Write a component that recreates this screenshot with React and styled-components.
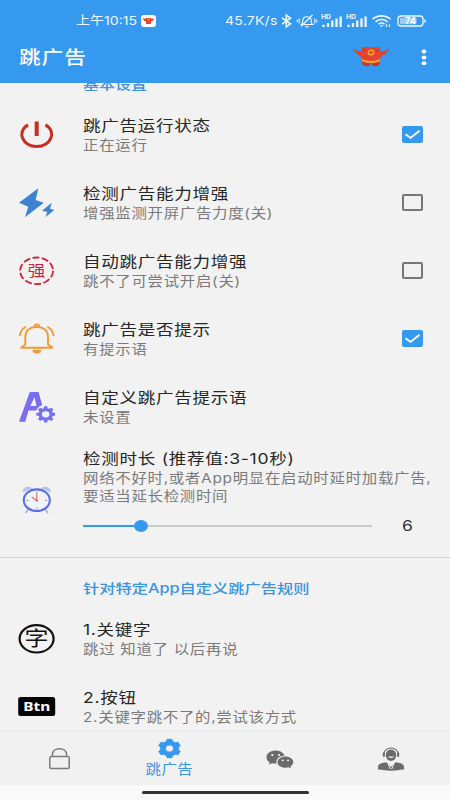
import React from "react";
import styled, { createGlobalStyle } from "styled-components";

const Global = createGlobalStyle`
  * { box-sizing: border-box; }
  html, body { margin: 0; padding: 0; }
  body { font-family: Inter, "Noto Sans CJK SC", sans-serif; background: #f2f2f2; }
  svg { display: block; overflow: visible; flex: none; }
`;

const Screen = styled.div`
  width: 450px;
  height: 800px;
  display: flex;
  flex-direction: column;
  overflow: hidden;
  background: #f2f2f2;
`;

const Label = styled.span`
  display: block;
  width: max-content;
  white-space: nowrap;
  transform: scaleX(${(p) => p.$stretch || 1.17});
  transform-origin: ${(p) => p.$origin || "left"} center;
`;

const Header = styled.header`
  height: 83px;
  flex: none;
  background: #3699f0;
  color: #fff;
`;

const StatusBar = styled.div`
  height: 42px;
  display: flex;
  align-items: center;
  justify-content: space-between;
  padding: 0 24px 0 76px;
`;

const StatusGroup = styled.div`
  display: flex;
  align-items: center;
`;

const StatusText = styled(Label)`
  font-size: 12px;
  line-height: 16px;
  letter-spacing: ${(p) => p.$spacing || 0}px;
  opacity: 0.92;
`;

const ClockSlot = styled.div`
  width: 65px;
`;

const SpeedSlot = styled.div`
  width: 55px;
`;

const TitleBar = styled.div`
  height: 32px;
  display: flex;
  align-items: center;
  padding: 0 23px 0 19px;
`;

const AppTitle = styled(Label)`
  font-size: 18.5px;
  line-height: 28px;
  font-weight: 500;
  letter-spacing: 0.8px;
  padding-bottom: 2px;
`;

const TitleActions = styled.div`
  display: flex;
  align-items: center;
  gap: 32px;
  margin-left: auto;
  padding-bottom: 2px;
`;

const Content = styled.main`
  flex: 1;
  min-height: 0;
  overflow: hidden;
`;

const SectionTitle = styled.h2`
  margin: 0;
  height: ${(p) => p.$height}px;
  padding: ${(p) => p.$top}px 0 0 83px;
  font-size: 13px;
  line-height: 20px;
  font-weight: 500;
  color: #3b93e2;
  margin-top: ${(p) => p.$shift || 0}px;
`;

const Row = styled.div`
  height: ${(p) => p.$height || 68}px;
  display: flex;
  align-items: center;
  padding: 0 27px 0 17px;
`;

const TextBlock = styled.div`
  width: 310px;
  margin-left: 26px;
  padding-top: ${(p) => (p.$tall ? 0 : 2)}px;
  padding-bottom: ${(p) => (p.$tall ? 10 : 0)}px;
`;

const ItemTitle = styled(Label)`
  font-size: 15px;
  line-height: 20px;
  letter-spacing: 0.6px;
  color: #262626;
`;

const ItemText = styled(Label)`
  font-size: 13.2px;
  line-height: 18px;
  letter-spacing: 0.6px;
  color: #7a7a7a;
`;

const Box = styled.span`
  width: 21px;
  height: 17px;
  margin-left: 10.5px;
  border-radius: 2px;
  border: ${(p) => (p.$on ? "0" : "2px solid #777")};
  background: ${(p) => (p.$on ? "#3699f0" : "transparent")};
  flex: none;
`;

const SliderLine = styled.div`
  display: flex;
  align-items: center;
  height: 24px;
  margin-top: 9px;
`;

const Track = styled.div`
  width: 289px;
  flex: none;
  height: 2px;
  display: flex;
  align-items: center;
  background: #cbcbcb;
`;

const Fill = styled.div`
  width: 51px;
  height: 2px;
  background: #3699f0;
`;

const Thumb = styled.div`
  width: 14px;
  height: 12px;
  border-radius: 50%;
  background: #3699f0;
`;

const SliderValue = styled(Label)`
  margin-left: 30px;
  font-size: 15px;
  line-height: 20px;
  color: #333;
`;

const Divider = styled.div`
  height: 1px;
  background: #d2d2d2;
`;

const Nav = styled.nav`
  height: 54px;
  flex: none;
  display: flex;
  padding: 0 4px;
  border-top: 1px solid #ebebeb;
  background: #f1f1f1;
`;

const NavItem = styled.div`
  flex: 1;
  display: flex;
  flex-direction: column;
  align-items: center;
  justify-content: center;
`;

const NavLabel = styled(Label)`
  font-size: 13.2px;
  line-height: 17px;
  margin-top: 3px;
  letter-spacing: 0.4px;
  color: #3d97e6;
`;

const GestureArea = styled.div`
  height: 15px;
  flex: none;
  display: flex;
  justify-content: center;
  padding-top: 6px;
  background: #fafafa;
`;

const GestureBar = styled.div`
  width: 167px;
  height: 3px;
  border-radius: 2px;
  background: #333;
`;

const RowSvg = ({ children }) => (
  <svg width="40" height="40" viewBox="0 0 40 40" fill="none">{children}</svg>
);

const PowerIcon = () => (
  <RowSvg>
    <path d="M11 10.8C-1 18 6 32.5 19.7 32.5S40.5 18 28.5 10.8" stroke="#cb2b20" strokeWidth="3.1" />
    <path d="M19.7 7.5V22" stroke="#cb2b20" strokeWidth="4" />
  </RowSvg>
);

const BoltIcon = () => (
  <RowSvg>
    <path d="M21.3 6.3 2 20.7l9.3 4L8 35.3 26.7 20.7l-8-2.7zM34.7 20.7 25 28.7l5.3 1.3-2 5.3L37.3 28 33 26.7z" fill="#3d83d2" />
  </RowSvg>
);

const StrongIcon = () => (
  <RowSvg>
    <ellipse cx="19.6" cy="20.8" rx="16.5" ry="13.3" stroke="#cf2339" strokeWidth="1.8" strokeDasharray="7 2.4" />
    <text transform="translate(10.8 26) scale(1.17 1)" fontSize="15" fill="#cf2339">强</text>
  </RowSvg>
);

const BellIcon = () => (
  <RowSvg>
    <g stroke="#f09b38" strokeWidth="1.9" strokeLinecap="round" strokeLinejoin="round">
      <path d="M8.3 26.2V19C8.3 12.5 13 9 19.7 9S31 12.5 31 19v7.2c0 1.8 4.4 1.8 4.4 3.6H4.2c0-1.8 4.1-1.8 4.1-3.6zM17.2 8.8C17 5.5 22.4 5.5 22.2 8.8M8.3 9C5.2 11 3.3 14 2.8 17.2M31 9c3.1 2 5 5 5.5 8.2" />
      <path d="M16.5 32.6h6.8c-.8 2.6-6 2.6-6.8 0z" fill="#f09b38" />
    </g>
  </RowSvg>
);

const gearPath = (cx, cy, rx, ry, teeth, inner) => {
  const pts = [];
  for (let i = 0; i < teeth; i += 1) {
    [[-0.36, inner], [-0.2, 1], [0.2, 1], [0.36, inner]].forEach(([o, r]) => {
      const a = ((i + o) / teeth) * Math.PI * 2 - Math.PI / 2;
      pts.push(`${(cx + Math.cos(a) * rx * r).toFixed(2)} ${(cy + Math.sin(a) * ry * r).toFixed(2)}`);
    });
  }
  return `M${pts.join("L")}Z`;
};

const FontGearIcon = () => (
  <RowSvg>
    <path d="M2 35.8 12.8 6h8.8l3.6 13.2c-3.2.8-5 2.6-5.8 5.3h-8L8.3 35.8zM13.3 20h6.2l-2-9z" fill="#796df2" fillRule="evenodd" />
    <path d={`${gearPath(28.7, 28.3, 9.5, 8.2, 8, 0.76)}M24.9 28.3a3.8 3.1 0 1 0 7.6 0a3.8 3.1 0 1 0-7.6 0`} fill="#796df2" fillRule="evenodd" />
  </RowSvg>
);

const AlarmIcon = () => (
  <RowSvg>
    <path d="M6 13.5C4.8 8.5 12 6 15.5 9.5zM33.6 13.5C34.8 8.5 27.6 6 24.1 9.5z" fill="#b5c4f3" />
    <path d="m11 30.5-2 3M28.6 30.5l2 3" stroke="#9eaeea" strokeWidth="1.5" strokeLinecap="round" />
    <ellipse cx="19.8" cy="21.2" rx="13" ry="10.8" fill="#f1f3fd" stroke="#5f6fdf" strokeWidth="2.1" />
    <path d="M19.8 12.8v1.7M19.8 28.5v1.7M9.5 21.5h1.8M28.2 21.5H30" stroke="#7b87df" />
    <path d="M19.8 14.5v7l-5-3.4" stroke="#ee7b69" strokeWidth="1.4" />
    <circle cx="19.8" cy="21.5" r="1.3" fill="#ee7b69" />
  </RowSvg>
);

const CharIcon = () => (
  <RowSvg>
    <ellipse cx="19.6" cy="20.8" rx="17" ry="13.7" stroke="#111" strokeWidth="2.2" />
    <text transform="translate(7.6 28.4) scale(1.17 1)" fontSize="20.5" fill="#111">字</text>
  </RowSvg>
);

const BtnIcon = () => (
  <RowSvg>
    <rect x="1.2" y="11" width="37" height="19" rx="2.5" fill="#050505" />
    <text x="19.8" y="25.2" textAnchor="middle" textLength="27" lengthAdjust="spacingAndGlyphs" fontSize="13" fontWeight="700" fontFamily="Noto Sans, sans-serif" fill="#fff">Btn</text>
  </RowSvg>
);

const Check = ({ on }) => (
  <Box $on={on}>
    {on && (
      <svg width="21" height="17" viewBox="0 0 21 17" fill="none">
        <path d="m3.5 8.2 5 3.7 9-7.2" stroke="#fff" strokeWidth="1.9" />
      </svg>
    )}
  </Box>
);

const Mascot = () => (
  <svg width="36" height="20" viewBox="0 0 36 20">
    <path d="M9 4C6 5 3 3.5 0 1.5c.7 3.6 3 4 3 4s.3 2.6 3 2.7c.8 1.7 2 1.8 4 1.5zM27 4c3 1 6-.5 9-2.5-.7 3.6-3 4-3 4s-.3 2.6-3 2.7c-.8 1.7-2 1.8-4 1.5z" fill="#dc4435" />
    <path d="M9 12C8 17 10 20 16 19l2-3 2 3c6 1 8-2 7-7z" fill="#c8362c" />
    <rect x="8.8" y="0" width="18.4" height="14.5" rx="2" fill="#e8432f" />
    <path d="M9 2.5q9 5 18 0" stroke="#b8322b" strokeWidth=".8" fill="none" />
    <path d="M9 12.2q9 3.4 18 0v2.3q-9 3.4-18 0z" fill="#f7a52c" />
    <ellipse cx="18" cy="5.5" rx="2.9" ry="2.3" fill="#e9502d" stroke="#f9b23c" strokeWidth="1.2" />
  </svg>
);

const AppBadge = () => (
  <svg width="15" height="12" viewBox="0 0 15 12">
    <rect width="15" height="12" rx="3" fill="#fff" />
    <path d="M1.5 3l3 1V3h6v1l3-1-1.8 3-1.5.2L9.8 9H5.2L4.8 6.2 3.2 6z" fill="#e5452c" />
    <ellipse cx="7.5" cy="4.3" rx="1.4" ry=".9" fill="#f5a143" />
  </svg>
);

const MoreIcon = () => (
  <svg width="6" height="17" viewBox="0 0 6 17" fill="#fff">
    <ellipse cx="3" cy="2.5" rx="2.4" ry="2" />
    <ellipse cx="3" cy="8.4" rx="2.4" ry="2" />
    <ellipse cx="3" cy="14.2" rx="2.4" ry="2" />
  </svg>
);

const StatusIcons = () => (
  <svg width="146" height="16" viewBox="0 0 146 16" fill="none" stroke="#f0f8ff">
    <path d="m2 4.8 8.5 6L6.3 14V2l4.2 3.2L2 11.2" strokeWidth="1.6" />
    <path d="M21.5 11.5c1.6-1 1-3 1.4-4.8.5-4 7.6-4 8.1 0 .4 1.8-.2 3.8 1.6 4.8zM25.3 13.2q1.7 1.4 3.4 0M32.5 2 21 13.5M19.2 5.5v5M34.8 5.5v5M17.2 6.8v2.5M36.8 6.8v2.5" strokeWidth="1.1" />
    {[41, 66].map((x) => (
      <g key={x}>
        <text x={x} y="6" fontSize="5.5" fontWeight="700" fill="#f0f8ff" stroke="none" textLength="10" lengthAdjust="spacingAndGlyphs">HD</text>
        <path d={`M${x + 2.5} 14v-2.2M${x + 7} 14V10M${x + 11.3} 14V7.5M${x + 15.5} 14V5.5M${x + 19.6} 14V3.5`} strokeWidth="2.3" />
      </g>
    ))}
    <path d="M92.5 6.2c5-4.5 13-4.5 18 0M95.5 8.8c3.5-3 8.5-3 12 0M98.5 11.2c2-1.6 4-1.6 6 0" strokeWidth="1.6" />
    <path d="m99.5 12.3 2 1.8 2-1.8z" fill="#f0f8ff" stroke="none" />
    <path d="M106.3 14v-2.8M109.3 11.2V14" strokeWidth="1.1" />
    <rect x="118" y="3" width="25" height="10" rx="3" strokeWidth="1.3" />
    <rect x="120" y="4.8" width="16.5" height="6.4" rx="1" fill="#9bcdf8" stroke="none" />
    <path d="M145 6.5v3" strokeWidth="1.4" />
    <text x="130.5" y="11.2" textAnchor="middle" fontSize="8.5" fontWeight="700" fill="#fff" stroke="none" textLength="11" lengthAdjust="spacingAndGlyphs">74</text>
  </svg>
);

const LockIcon = () => (
  <svg width="21" height="22" viewBox="0 0 21 22" fill="none" stroke="#7b7b7b" strokeWidth="1.5">
    <rect x=".8" y="8.4" width="19.4" height="12" rx="1.5" />
    <path d="M3.5 8.4V6.3c0-7.4 14-7.4 14 0v2.1" />
  </svg>
);

const GearIcon = () => (
  <svg width="23" height="19" viewBox="0 0 23 19">
    <path d={`${gearPath(11.5, 9.5, 11.6, 9.6, 6, 0.8)}M7.7 9.5a3.8 3.2 0 1 0 7.6 0a3.8 3.2 0 1 0-7.6 0`} fill="#3699f0" fillRule="evenodd" stroke="#3699f0" strokeWidth=".4" strokeLinejoin="round" />
  </svg>
);

const ChatIcon = () => (
  <svg width="28" height="18" viewBox="0 0 28 18" fill="#6b6b6b">
    <path d="M9.5.5C4.3.5.5 3.6.5 7.2c0 2.2 1.2 3.9 3.2 5.2l-.8 2.3 3.2-1.5c1.4.4 2.6.6 4.4.4-1-4.4 3-7.9 8-7.8C17.7 2.6 14 .5 9.5.5z" />
    <path d="M19.5 6.5c-4.5 0-8 2.5-8 5.7s3.5 5.5 8 5.5c1.1 0 2-.1 3-.4l2.4 1.1-.5-2c1.7-1.1 2.9-2.5 2.9-4.3 0-3.1-3.4-5.6-7.8-5.6z" />
    <g fill="#f1f1f1">
      <ellipse cx="6.3" cy="5" rx="1.2" ry="1" />
      <ellipse cx="13" cy="5" rx="1.2" ry="1" />
      <ellipse cx="16.8" cy="10.3" rx="1.1" ry=".9" />
      <ellipse cx="22" cy="10.3" rx="1.1" ry=".9" />
    </g>
  </svg>
);

const SupportIcon = () => (
  <svg width="28" height="24" viewBox="0 0 28 24" fill="#6b6b6b">
    <ellipse cx="14" cy="8.2" rx="5.2" ry="5.8" />
    <path d="M6.8 7.5C6.8-1.2 21.2-1.2 21.2 7.5" fill="none" stroke="#6b6b6b" strokeWidth="1.1" />
    <rect x="5.8" y="5.5" width="2.1" height="4.5" rx="1" />
    <rect x="20.1" y="5.5" width="2.1" height="4.5" rx="1" />
    <path d="M10.8 9.5q3.2 3 6.4 0z" fill="#f1f1f1" />
    <path d="M9.7 15.2 14 20l4.3-4.8c4.8.7 8 1.2 8.5 3.8l.5 3.3c-8.6 1.8-18 1.8-26.6 0l.5-3.3c.5-2.6 4-3.1 8.8-3.8z" />
    <path d="m10.5 15 2.7 7M17.5 15l-2.7 7" stroke="#f1f1f1" strokeWidth="1" />
  </svg>
);

const basicItems = [
  { icon: PowerIcon, title: "跳广告运行状态", text: "正在运行", checked: true },
  { icon: BoltIcon, title: "检测广告能力增强", text: "增强监测开屏广告力度(关)", checked: false },
  { icon: StrongIcon, title: "自动跳广告能力增强", text: "跳不了可尝试开启(关)", checked: false },
  { icon: BellIcon, title: "跳广告是否提示", text: "有提示语", checked: true },
  { icon: FontGearIcon, title: "自定义跳广告提示语", text: "未设置" },
];

const ruleItems = [
  { icon: CharIcon, title: "1.关键字", text: "跳过 知道了 以后再说" },
  { icon: BtnIcon, title: "2.按钮", text: "2.关键字跳不了的,尝试该方式" },
];

const SettingRow = ({ icon: Icon, title, text, checked }) => (
  <Row>
    <Icon />
    <TextBlock>
      <ItemTitle>{title}</ItemTitle>
      <ItemText>{text}</ItemText>
    </TextBlock>
    {checked !== undefined && <Check on={checked} />}
  </Row>
);

export default function App() {
  return (
    <>
      <Global />
      <Screen>
        <Header>
          <StatusBar>
            <StatusGroup>
              <ClockSlot><StatusText>上午10:15</StatusText></ClockSlot>
              <AppBadge />
            </StatusGroup>
            <StatusGroup>
              <SpeedSlot><StatusText $spacing={0.2}>45.7K/s</StatusText></SpeedSlot>
              <StatusIcons />
            </StatusGroup>
          </StatusBar>
          <TitleBar>
            <AppTitle>跳广告</AppTitle>
            <TitleActions><Mascot /><MoreIcon /></TitleActions>
          </TitleBar>
        </Header>
        <Content>
          <SectionTitle $height={26} $top={0} $shift={-9}><Label $stretch={1.23}>基本设置</Label></SectionTitle>
          {basicItems.map((item) => <SettingRow key={item.title} {...item} />)}
          <Row $height={117}>
            <AlarmIcon />
            <TextBlock $tall>
              <ItemTitle>检测时长 (推荐值:3-10秒)</ItemTitle>
              <ItemText>网络不好时,或者App明显在启动时延时加载广告,<br />要适当延长检测时间</ItemText>
              <SliderLine>
                <Track><Fill /><Thumb /></Track>
                <SliderValue>6</SliderValue>
              </SliderLine>
            </TextBlock>
          </Row>
          <Divider />
          <SectionTitle $height={46} $top={20}><Label $stretch={1.25}>针对特定App自定义跳广告规则</Label></SectionTitle>
          {ruleItems.map((item) => <SettingRow key={item.title} {...item} />)}
        </Content>
        <Nav>
          <NavItem><LockIcon /></NavItem>
          <NavItem><GearIcon /><NavLabel $origin="center">跳广告</NavLabel></NavItem>
          <NavItem><ChatIcon /></NavItem>
          <NavItem><SupportIcon /></NavItem>
        </Nav>
        <GestureArea><GestureBar /></GestureArea>
      </Screen>
    </>
  );
}
